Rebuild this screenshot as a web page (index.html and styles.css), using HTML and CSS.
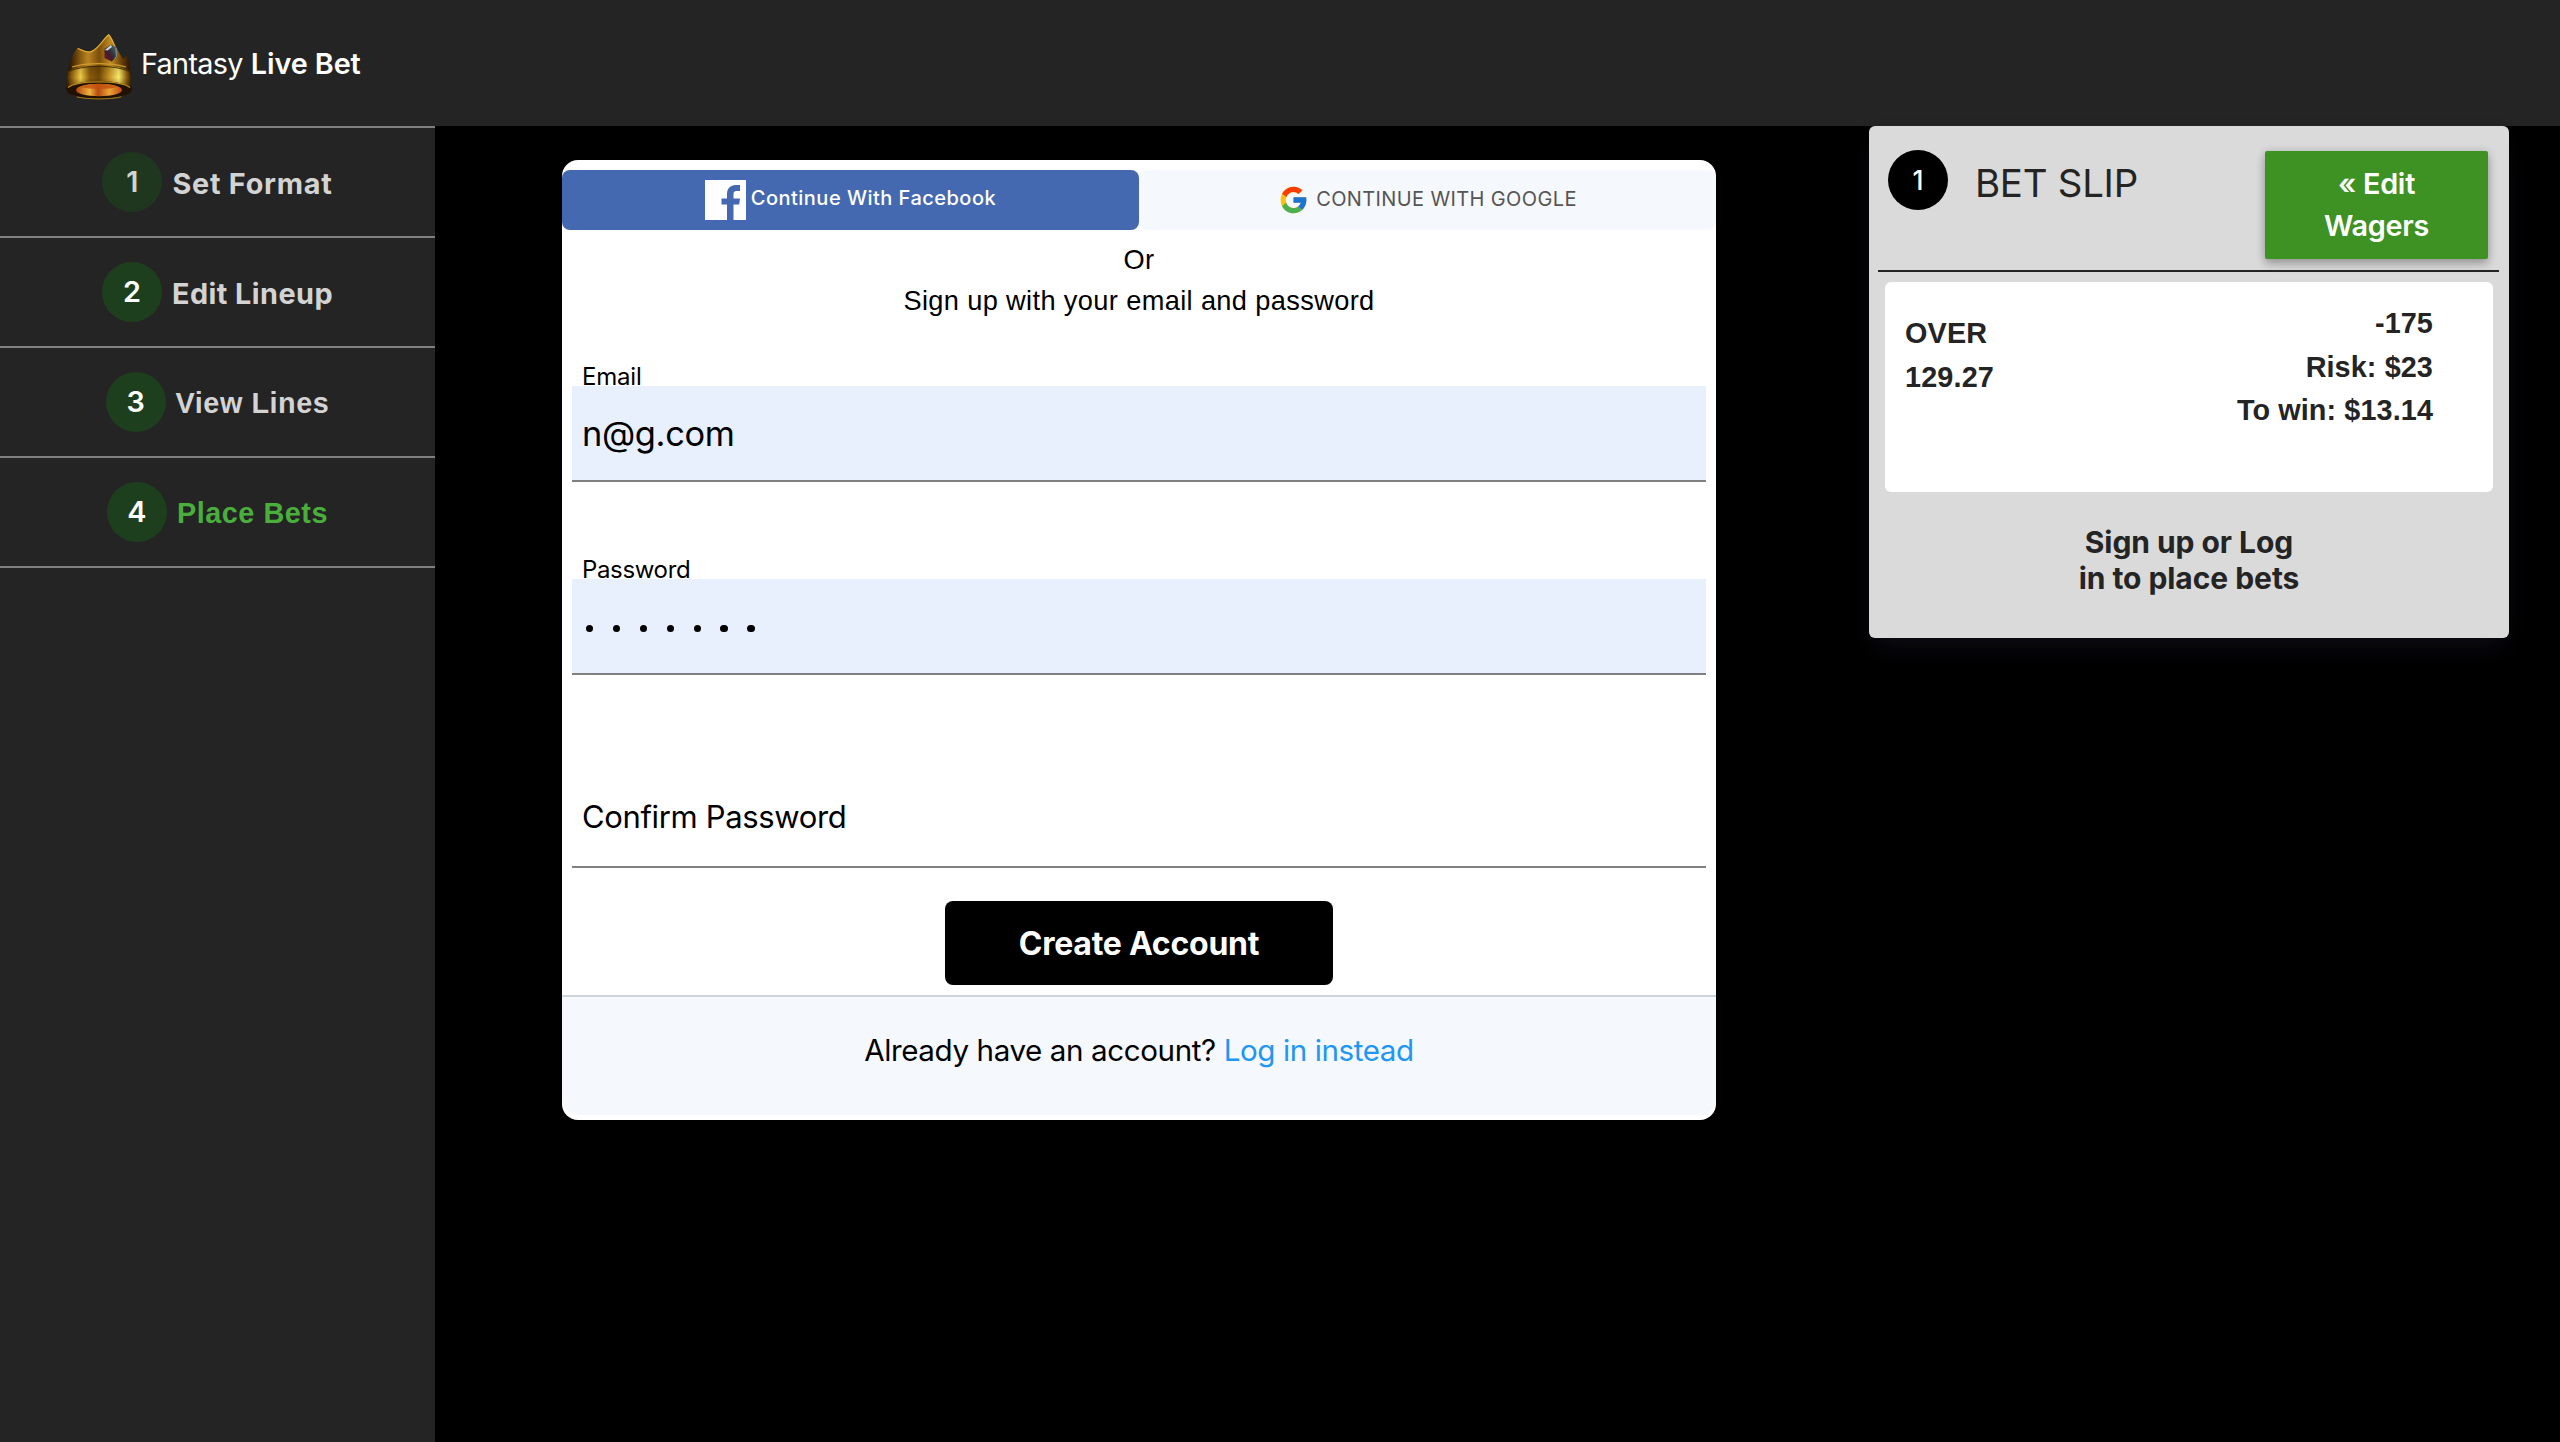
FILE: index.html
```html
<!DOCTYPE html>
<html lang="en">
<head>
<meta charset="utf-8">
<title>Fantasy Live Bet</title>
<link rel="stylesheet" href="styles.css">
</head>
<body>
<header class="topbar">
  <svg class="crown" viewBox="6 4 66 66" aria-hidden="true">
    <defs>
      <linearGradient id="band" x1="0" x2="1">
        <stop offset="0" stop-color="#2a1701"/><stop offset=".08" stop-color="#8a5a0a"/><stop offset=".22" stop-color="#f0ca48"/><stop offset=".36" stop-color="#8a590b"/><stop offset=".5" stop-color="#704707"/><stop offset=".64" stop-color="#c08e20"/><stop offset=".8" stop-color="#fbea6a"/><stop offset=".92" stop-color="#8a5d0c"/><stop offset="1" stop-color="#2a1701"/>
      </linearGradient>
      <linearGradient id="peaks" x1="0" x2="1">
        <stop offset="0" stop-color="#1c0f00"/><stop offset=".2" stop-color="#8a5a10"/><stop offset=".32" stop-color="#b98522"/><stop offset=".5" stop-color="#7b4e0a"/><stop offset=".68" stop-color="#c18c24"/><stop offset=".85" stop-color="#6b4307"/><stop offset="1" stop-color="#241300"/>
      </linearGradient>
      <linearGradient id="fade" x1="0" y1="0" x2="0" y2="1">
        <stop offset="0" stop-color="#000" stop-opacity=".15"/><stop offset=".35" stop-color="#000" stop-opacity="0"/><stop offset="1" stop-color="#120700" stop-opacity=".7"/>
      </linearGradient>
      <linearGradient id="inside" x1="0" x2="1">
        <stop offset="0" stop-color="#b04210"/><stop offset=".3" stop-color="#f0b43c"/><stop offset=".48" stop-color="#b5480f"/><stop offset=".72" stop-color="#eda436"/><stop offset="1" stop-color="#c04a14"/>
      </linearGradient>
      <linearGradient id="gem" x1="0" y1="1" x2="1" y2="0">
        <stop offset="0" stop-color="#7c1228"/><stop offset=".4" stop-color="#41202c"/><stop offset=".6" stop-color="#303a40"/><stop offset="1" stop-color="#67757a"/>
      </linearGradient>
    </defs>
    <path d="M8 44C9 32 13 22 17.700 18C22 19 25 22 30 21.500C38 20 43 8 48.700 4.200C52 5 55 18 63.500 29L66.300 25.500C69 29 70 36 70.500 44Z" fill="url(#peaks)"/>
    <path d="M17.700 18.500C22 20 25 22.500 30 22C38 20.500 43 9 48.700 4.800C51 7 53 12 55 17" fill="none" stroke="#e2b23a" stroke-width="1.100"/>
    <path d="M8 41C22 34 56 34 70 41L72 58C70 73 8 73 6 58Z" fill="url(#band)"/>
    <path d="M8 41C22 34 56 34 70 41L72 58C70 73 8 73 6 58Z" fill="url(#fade)"/>
    <path d="M12 37C26 32.500 52 32.500 66 37" fill="none" stroke="#cf9b2c" stroke-width="1.200"/>
    <path d="M8.500 41.500C24 34.500 54 34.500 69.500 41.500" fill="none" stroke="#3a2201" stroke-width=".900"/>
    <ellipse cx="39" cy="60" rx="32.500" ry="9" fill="#211101"/>
    <path d="M8 57.500C18 50 60 50 70 57.500" fill="none" stroke="#b98a24" stroke-width="1.100"/>
    <path d="M17 67C29 69.500 49 69.500 61 67" fill="none" stroke="#a97a1d" stroke-width="1"/>
    <ellipse cx="39" cy="60" rx="23" ry="6.300" fill="url(#inside)"/>
    <path d="M20 57C30 52.500 48 52.500 58 57C48 59.500 30 59.500 20 57Z" fill="#c2500f" opacity=".8"/>
    <path d="M51 14.500L56.500 17.500V27L51.500 31.500L44.500 28V19Z" fill="url(#gem)"/>
    <path d="M44.800 20L51 15L52 17L47.500 20.500Z" fill="#c5d9df"/>
    <path d="M56 18L56.400 26.500L54.500 29" fill="none" stroke="#8fa0a5" stroke-width=".900"/>
  </svg>
  <div class="brand"><span class="brand-light">Fantasy</span> <strong>Live Bet</strong></div>
</header>
<div class="page">
  <nav class="steps">
    <a class="step first"><span class="num">1</span><span class="label">Set Format</span></a>
    <a class="step"><span class="num">2</span><span class="label tight">Edit Lineup</span></a>
    <a class="step"><span class="num">3</span><span class="label alt">View Lines</span></a>
    <a class="step current"><span class="num">4</span><span class="label alt">Place Bets</span></a>
  </nav>
  <main class="signup">
    <div class="social">
      <button class="facebook">
        <svg width="41" height="40" viewBox="0 0 41 40" aria-hidden="true"><rect width="41" height="40" fill="#fff"/><path d="M22 40V24.500H16.500V18.500H22V14C22 8.500 25.500 5 30.500 5H35V11H31.500C29.500 11 28.500 12 28.500 14V18.500H35L34.200 24.500H28.500V40Z" fill="#4469b0"/></svg>
        <span>Continue With Facebook</span>
      </button>
      <button class="google">
        <svg width="29" height="30" viewBox="1.500 1.500 45 45" preserveAspectRatio="none" aria-hidden="true"><path fill="#FFC107" d="M43.600 20H24v8h11.300C33.700 32.700 29.200 36 24 36c-6.600 0-12-5.400-12-12s5.400-12 12-12c3.100 0 5.800 1.200 8 3l5.700-5.700C34 6.100 29.300 4 24 4 13 4 4 13 4 24s9 20 20 20 20-9 20-20c0-1.300-.1-2.700-.4-4z"/><path fill="#FF3D00" d="M6.300 14.700l6.600 4.800C14.700 15.100 19 12 24 12c3.100 0 5.800 1.200 8 3l5.700-5.700C34 6.100 29.300 4 24 4 16.300 4 9.700 8.300 6.300 14.700z"/><path fill="#4CAF50" d="M24 44c5.200 0 9.900-2 13.400-5.200l-6.200-5.200C29.200 35.100 26.700 36 24 36c-5.200 0-9.600-3.300-11.300-8l-6.500 5C9.500 39.600 16.200 44 24 44z"/><path fill="#1976D2" d="M43.600 20H24v8h11.300c-.8 2.200-2.200 4.200-4.100 5.600l6.200 5.200C37 39.200 44 34 44 24c0-1.300-.1-2.700-.4-4z"/></svg>
        <span>CONTINUE WITH GOOGLE</span>
      </button>
    </div>
    <div class="intro"><div>Or</div><div>Sign up with your email and password</div></div>
    <div class="field">
      <div class="caption email">Email</div>
      <div class="entry filled">n@g.com</div>
    </div>
    <div class="field">
      <div class="caption">Password</div>
      <div class="entry filled dots"><i></i><i></i><i></i><i></i><i></i><i></i><i></i></div>
    </div>
    <div class="field">
      <div class="caption"></div>
      <div class="entry empty">Confirm Password</div>
    </div>
    <button class="create">Create Account</button>
    <div class="login">Already have an account? <a>Log in instead</a></div>
  </main>
  <aside class="slip">
    <div class="slip-head">
      <span class="count">1</span>
      <h2>BET SLIP</h2>
      <button class="edit">« Edit<br>Wagers</button>
    </div>
    <div class="wager">
      <div class="pick">OVER<br>129.27</div>
      <div class="odds">-175<br>Risk: $23<br>To win: $13.14</div>
    </div>
    <div class="prompt">Sign up or Log<br>in to place bets</div>
  </aside>
</div>
</body>
</html>
```
FILE: styles.css
```css
* { box-sizing: border-box; }
body { margin: 0; min-height: 1442px; display: flex; flex-direction: column; background: #000; color: #000; font-family: Inter, sans-serif; }
button { border: 0; padding: 0; font-family: inherit; }

.topbar { height: 126px; flex: none; display: flex; align-items: center; gap: 9px; padding: 8px 66px 0; background: #242424; color: #fff; }
.crown { width: 66px; height: 66px; }
.brand { font-size: 28.8px; line-height: 40px; padding-bottom: 7px; white-space: pre; }
.brand-light { letter-spacing: -.7px; }
.brand strong { font-weight: 600; letter-spacing: -.1px; }

.page { flex: 1; display: flex; align-items: flex-start; }

.steps { width: 435px; align-self: stretch; background: #242424; border-top: 2px solid #808080; }
.step { height: 110px; display: flex; align-items: center; justify-content: center; gap: 10px; border-bottom: 2px solid #808080; font-size: 28.8px; font-weight: 600; color: #d3d3d3; }
.num { width: 60px; height: 60px; border-radius: 50%; background: #1e3f1d; color: #fff; line-height: 60px; text-align: center; }
.first .num { background: #1f371f; color: #d3d3d3; }
.label { padding-top: 3px; font-weight: 700; letter-spacing: .75px; }
.label.tight { letter-spacing: .45px; }
.label.alt { font-family: "Liberation Sans", Arial, sans-serif; letter-spacing: .55px; padding-top: 2px; }
.current .label { color: #4aae3d; }

.signup { width: 1154px; margin: 34px 0 0 127px; padding: 10px 0 5px; background: #fff; border-radius: 16px; display: flex; flex-direction: column; }
.social { display: grid; grid-template-columns: 1fr 1fr; }
.social button { height: 60px; border-radius: 8px; display: flex; align-items: center; justify-content: center; font-size: 20px; }
.social .facebook { background: #4469b0; color: #fff; font-weight: 500; letter-spacing: .48px; gap: 5px; }
.facebook span { padding-bottom: 4px; }
.social .google { background: #f5f8fd; color: #555; letter-spacing: .38px; gap: 8px; padding-left: 1px; }
.google span { padding-bottom: 2px; }
.intro { margin-top: 9px; margin-bottom: 45px; text-align: center; font: 27.2px/41px "Liberation Sans", Arial, sans-serif; letter-spacing: .37px; }

.field { margin: 0 10px 77px; }
.field + .field + .field { margin-bottom: 33px; }
.caption { height: 20px; line-height: 22px; padding-left: 10px; font-size: 24px; letter-spacing: -.35px; }
.caption.email { letter-spacing: -.2px; }
.entry { height: 96px; border-bottom: 2px solid #808080; padding-left: 10px; display: flex; align-items: center; }
.entry.filled { background: #e8effd; font-size: 34.4px; letter-spacing: -.35px; }
.entry.dots { padding: 5px 0 0 14px; gap: 19.5px; }
.dots i { width: 7.4px; height: 7.4px; border-radius: 50%; background: #000; }
.entry.empty { font-size: 31px; letter-spacing: -.35px; padding-bottom: 6px; }

.create { width: 388px; height: 84px; align-self: center; border-radius: 8px; background: #000; color: #fff; font-size: 32px; font-weight: 700; letter-spacing: -.25px; }
.login { margin-top: 10px; height: 120px; padding-bottom: 12px; border-top: 2px solid #ced5da; border-radius: 0 0 16px 16px; background: #f5f8fd; line-height: 106px; text-align: center; font-size: 29.6px; letter-spacing: -.41px; }
.login a { color: #2196f3; }

.slip { width: 640px; height: 512px; margin-left: 153px; border-radius: 6px; background: #dadada; color: #242424; box-shadow: 0 13px 27px -5px rgba(50, 50, 93, .25); }
.slip-head { height: 146px; margin: 0 10px 0 9px; padding: 24px 11px 0 10px; border-bottom: 2px solid #242424; display: flex; align-items: flex-start; }
.count { width: 60px; height: 60px; border-radius: 50%; background: #000; color: #fff; font-size: 26.4px; font-weight: 500; line-height: 60px; text-align: center; }
.slip h2 { margin: 3px 0 0 27px; font-size: 38.4px; font-weight: 400; line-height: 60px; letter-spacing: -.25px; }
.edit { width: 223px; height: 108px; margin: 1px 0 0 auto; border-radius: 2px; background: #3e9224; color: #fff; font-size: 28.8px; font-weight: 600; line-height: 42px; letter-spacing: -.25px; box-shadow: 0 0 10px rgba(0, 0, 0, .12), 0 5px 10px rgba(0, 0, 0, .26); }
.wager { height: 210px; margin: 10px 16px 0; border-radius: 6px; background: #fff; display: flex; justify-content: space-between; padding: 20px 60px 0 20px; font: 700 28.8px/43.5px "Liberation Sans", Arial, sans-serif; }
.pick { padding-top: 9px; line-height: 44px; letter-spacing: .15px; }
.odds { text-align: right; letter-spacing: .1px; }
.prompt { margin-top: 32px; text-align: center; font-size: 30px; font-weight: 700; line-height: 36px; letter-spacing: -.05px; }
```
